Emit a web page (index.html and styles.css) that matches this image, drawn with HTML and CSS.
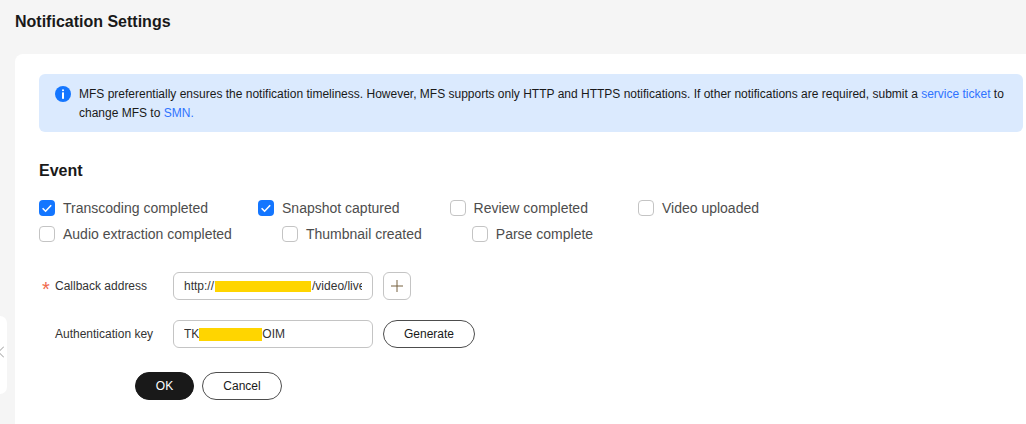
FILE: index.html
```html
<!DOCTYPE html>
<html lang="en">
<head>
<meta charset="utf-8">
<title>Notification Settings</title>
<link rel="stylesheet" href="styles.css">
</head>
<body>
<div class="page">
  <h1 class="title">Notification Settings</h1>
  <main class="card">
    <div class="alert">
      <svg class="alert-icon" width="16" height="16" viewBox="0 0 16 16"><circle cx="8" cy="8" r="8" fill="#1476ff"/><rect x="7" y="3.2" width="2" height="2" rx="1" fill="#fff"/><rect x="7" y="6.4" width="2" height="6.4" fill="#fff"/></svg>
      <p class="alert-text">MFS preferentially ensures the notification timeliness. However, MFS supports only HTTP and HTTPS notifications. If other notifications are required, submit a <a class="link">service ticket</a> to change MFS to <a class="link">SMN.</a></p>
    </div>
    <h2 class="section">Event</h2>
    <div class="checks">
      <label class="check"><span class="box on"><svg width="16" height="16" viewBox="0 0 16 16"><path d="M3.6 8.2l3 3 5.6-6" fill="none" stroke="#fff" stroke-width="1.6"/></svg></span>Transcoding completed</label>
      <label class="check"><span class="box on"><svg width="16" height="16" viewBox="0 0 16 16"><path d="M3.6 8.2l3 3 5.6-6" fill="none" stroke="#fff" stroke-width="1.6"/></svg></span>Snapshot captured</label>
      <label class="check"><span class="box"></span>Review completed</label>
      <label class="check"><span class="box"></span>Video uploaded</label>
      <label class="check"><span class="box"></span>Audio extraction completed</label>
      <label class="check"><span class="box"></span>Thumbnail created</label>
      <label class="check"><span class="box"></span>Parse complete</label>
    </div>
    <div class="row">
      <span class="label"><span class="star">*</span>Callback address</span>
      <div class="input"><div class="value">http://<span class="mask mask-a"></span>/video/live</div></div>
      <button class="plus" type="button"><svg width="12" height="12" viewBox="0 0 12 12"><path d="M6 0v12M0 6h12" stroke="#77603f" stroke-width="1" fill="none"/></svg></button>
    </div>
    <div class="row">
      <span class="label">Authentication key</span>
      <div class="input"><div class="value">TK<span class="mask mask-b"></span>OIM</div></div>
      <button class="btn gen" type="button">Generate</button>
    </div>
    <div class="actions">
      <button class="btn ok" type="button">OK</button>
      <button class="btn cancel" type="button">Cancel</button>
    </div>
  </main>
</div>
<div class="handle"><svg width="4" height="12" viewBox="0 0 4 12"><path d="M4 .5L-1.5 6 4 11.5" fill="none" stroke="#999" stroke-width="1"/></svg></div>
</body>
</html>
```
FILE: styles.css
```css
* { box-sizing: border-box; }
html, body { margin: 0; height: 100%; overflow: hidden; }
body { background: #f5f5f5; font-family: "Liberation Sans", Arial, sans-serif; color: #191919; width: 1026px; height: 424px; position: relative; }
.page { padding: 12px 0 0 15px; }
.title { margin: 0; font-size: 16px; line-height: 20px; font-weight: 700; color: #191919; }
.card { margin-top: 22px; background: #fff; border-radius: 8px 0 0 0; height: 370px; padding: 20px 0 0 24px; }
.alert { width: 984px; height: 58px; background: #dbeafe; border-radius: 6px; display: flex; padding: 12px 16px; gap: 8px; }
.alert-icon { flex: none; }
.alert-text { margin: -1px 0 0; font-size: 12px; line-height: 19px; color: #191919; }
.link { color: #2f73ff; }
.section { margin: 30px 0 0; font-size: 16px; line-height: 18px; font-weight: 700; color: #191919; }
.checks { display: flex; flex-wrap: wrap; width: 760px; column-gap: 50px; row-gap: 6px; margin-top: 18px; }
.check { display: flex; align-items: center; gap: 8px; font-size: 14px; line-height: 20px; color: #4d4d4d; }
.box { width: 16px; height: 16px; border: 1px solid #c4c4c4; border-radius: 4px; background: #fff; flex: none; }
.box.on { background: #1476ff; border: 0; }
.box svg { display: block; }
.row { display: flex; align-items: center; }
.row + .row { margin-top: 20px; }
.checks + .row { margin-top: 28px; }
.label { width: 134px; padding-left: 16px; font-size: 12px; color: #333; position: relative; }
.star { position: absolute; left: 3px; top: 1px; color: #f0694d; font-size: 20px; line-height: 18px; }
.input { width: 200px; height: 28px; border: 1px solid #c4c4c4; border-radius: 6px; padding: 0 10px; }
.value { height: 26px; font-size: 12px; color: #333; white-space: nowrap; overflow: hidden; display: flex; align-items: center; }
.mask { display: inline-block; background: #ffd500; flex: none; }
.mask-a { width: 96px; height: 11px; margin: 0 1px; }
.mask-b { width: 63px; height: 13px; }
.plus { width: 28px; height: 28px; margin-left: 10px; border: 1px solid #c4c4c4; border-radius: 6px; background: #fff; padding: 0; display: flex; align-items: center; justify-content: center; }
.btn { font-family: inherit; font-size: 12px; height: 28px; border-radius: 14px; border: 1px solid #4d4d4d; background: #fff; color: #191919; padding: 0; }
.gen { width: 92px; margin-left: 10px; }
.actions { display: flex; gap: 8px; margin-top: 24px; padding-left: 96px; }
.ok { width: 59px; background: #191919; border-color: #191919; color: #fff; }
.cancel { width: 80px; }
.handle { position: absolute; left: 0; top: 316px; width: 7px; height: 78px; background: #fff; border-radius: 0 8px 8px 0; display: flex; align-items: center; padding-bottom: 6px; }
```
